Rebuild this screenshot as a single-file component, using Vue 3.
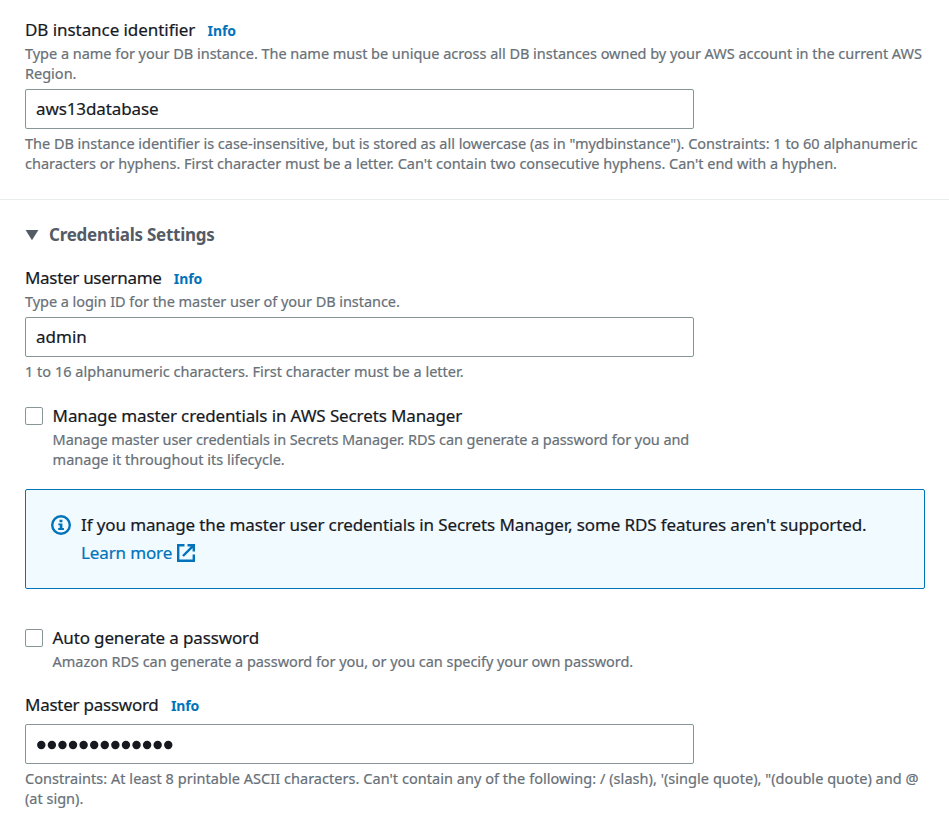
<script setup>
import { ref } from 'vue'

const identifier = ref('aws13database')
const username = ref('admin')
const password = ref('secretpasswd1')
const manageSecrets = ref(false)
const autoGenerate = ref(false)
</script>

<template>
  <main class="page">
    <section class="field identifier">
      <div class="label"><span class="name n-identifier">DB instance identifier</span><a class="info">Info</a></div>
      <p class="hint">
        <span class="line a1">Type a name for your DB instance. The name must be unique across all DB instances owned by your AWS account in the current AWS</span>
        <span class="line a2">Region.</span>
      </p>
      <input v-model="identifier" class="input i-identifier" type="text" />
      <p class="hint after">
        <span class="line a3">The DB instance identifier is case-insensitive, but is stored as all lowercase (as in "mydbinstance"). Constraints: 1 to 60 alphanumeric</span>
        <span class="line a4">characters or hyphens. First character must be a letter. Can't contain two consecutive hyphens. Can't end with a hyphen.</span>
      </p>
    </section>

    <section class="credentials">
      <h2 class="heading">
        <svg class="caret" viewBox="0 0 14 12"><path d="M.6 1h12.8L7 11.2z" /></svg>
        <span class="title">Credentials Settings</span>
      </h2>

      <div class="field username">
        <div class="label"><span class="name n-username">Master username</span><a class="info">Info</a></div>
        <p class="hint"><span class="line b1">Type a login ID for the master user of your DB instance.</span></p>
        <input v-model="username" class="input i-username" type="text" />
        <p class="hint after"><span class="line b2">1 to 16 alphanumeric characters. First character must be a letter.</span></p>
      </div>

      <label class="option manage">
        <input v-model="manageSecrets" class="box" type="checkbox" />
        <span class="option-text">
          <span class="option-name o-manage">Manage master credentials in AWS Secrets Manager</span>
          <span class="hint">
            <span class="line c1">Manage master user credentials in Secrets Manager. RDS can generate a password for you and</span>
            <span class="line c2">manage it throughout its lifecycle.</span>
          </span>
        </span>
      </label>

      <div class="alert">
        <svg class="info-icon" viewBox="0 0 20 20">
          <circle cx="10" cy="10" r="8.8" />
          <path class="solid" d="M8.5 4.8h2.9v2.5H8.5zM7.3 8.4h4.1v4.7h1.5V15H7.2v-1.9h1.5v-2.8H7.3z" />
        </svg>
        <div class="alert-text">
          <div class="alert-line d1">If you manage the master user credentials in Secrets Manager, some RDS features aren't supported.</div>
          <a class="learn"><span class="d2">Learn more</span>
            <svg class="external" viewBox="0 0 18 18"><path d="M7.5 1.2H1.2v15.6h15.6v-6.3M10.5 1.2h6.3v6.3M16.8 1.2L6 12" /></svg>
          </a>
        </div>
      </div>

      <label class="option auto">
        <input v-model="autoGenerate" class="box" type="checkbox" />
        <span class="option-text">
          <span class="option-name o-auto">Auto generate a password</span>
          <span class="hint"><span class="line e1">Amazon RDS can generate a password for you, or you can specify your own password.</span></span>
        </span>
      </label>

      <div class="field password">
        <div class="label"><span class="name n-password">Master password</span><a class="info">Info</a></div>
        <div class="input masked" role="textbox">
          <svg class="dots" viewBox="0 0 140 10">
            <circle v-for="(c, i) in password" :key="i" :cx="5.3 + i * 10.58" cy="5" r="4.2" />
          </svg>
        </div>
        <p class="hint after">
          <span class="line f1">Constraints: At least 8 printable ASCII characters. Can't contain any of the following: / (slash), '(single quote), "(double quote) and @</span>
          <span class="line f2">(at sign).</span>
        </p>
      </div>
    </section>
  </main>
</template>

<style>
body { background: #fff; overflow: hidden; }
</style>

<style scoped>
.page {
  box-sizing: border-box;
  height: 817px;
  overflow: hidden;
  font-family: "Noto Sans", "Open Sans", sans-serif;
  color: #16191f;
  -webkit-text-stroke: 0.2px;
}
.identifier { padding: 15px 24px 26px 25px; border-bottom: 1px solid #eaeded; }
.credentials { padding: 21px 24px 0 25px; }
.label { display: flex; align-items: center; gap: 12.3px; height: 28px; white-space: nowrap; }
.name, .option-name { font-size: 17px; line-height: 28px; }
.name { padding-top: 2px; }
.info { font-size: 14px; line-height: 28px; padding-top: 3px; font-weight: 700; letter-spacing: -0.1px; color: #0073bb; -webkit-text-stroke: 0; }
.hint { display: block; margin: 0; font-size: 14.5px; line-height: 20px; color: #687078; }
.line { display: block; white-space: nowrap; }
.after { padding-top: 4px; }
.input {
  display: block;
  box-sizing: border-box;
  width: 669px;
  height: 40px;
  margin: 6px 0 0;
  padding: 0 10px 2px;
  border: 1px solid #879596;
  border-radius: 2px;
  background: #fff;
  outline: none;
  color: #16191f;
  font-family: inherit;
  font-size: 17px;
}
.heading { display: flex; align-items: center; gap: 10px; margin: 0; height: 28px; color: #545b64; -webkit-text-stroke: 0; }
.caret { width: 14px; height: 12px; fill: currentColor; }
.title { font-size: 17px; line-height: 28px; font-weight: 700; letter-spacing: -0.25px; white-space: nowrap; }
.username { padding-top: 14px; }
.option { display: flex; gap: 9.6px; }
.manage { padding-top: 20px; }
.auto { padding-top: 34px; }
.box {
  appearance: none;
  flex: none;
  box-sizing: border-box;
  width: 18px;
  height: 18px;
  margin: 6px 0 0;
  border: 1px solid #879596;
  border-radius: 2px;
  background: #fff;
}
.option-text, .option-name { display: block; white-space: nowrap; }
.option-name { padding-top: 1px; margin-bottom: -1px; }
.alert {
  display: flex;
  gap: 10px;
  box-sizing: border-box;
  height: 100px;
  margin-top: 20px;
  padding: 21px 25px;
  border: 1px solid #0073bb;
  border-radius: 2px;
  background: #f1faff;
}
.info-icon { flex: none; width: 20px; height: 20px; margin-top: 4px; fill: none; stroke: #0073bb; stroke-width: 2.4; }
.solid { fill: #0073bb; stroke: none; }
.alert-text { font-size: 17px; line-height: 28px; white-space: nowrap; }
.learn { display: flex; align-items: center; gap: 5px; color: #0073bb; }
.external { width: 18px; height: 18px; fill: none; stroke: currentColor; stroke-width: 2.4; }
.password { padding-top: 19px; }
.masked { display: flex; align-items: center; padding-top: 2px; padding-bottom: 0; }
.dots { width: 140px; height: 10px; fill: #16191f; }

.n-identifier { letter-spacing: -0.06px; }
.n-username { letter-spacing: -0.3px; }
.n-password { letter-spacing: -0.25px; }
.i-identifier { letter-spacing: -0.1px; }
.o-manage { letter-spacing: -0.12px; }
.o-auto { letter-spacing: -0.14px; }
.a1 { letter-spacing: -0.03px; }
.a3 { letter-spacing: -0.022px; }
.a4 { letter-spacing: -0.02px; }
.b1 { letter-spacing: -0.05px; }
.b2 { letter-spacing: 0.015px; }
.c1 { letter-spacing: -0.08px; }
.d1 { letter-spacing: -0.11px; }
.d2 { letter-spacing: -0.13px; }
.e1 { letter-spacing: -0.05px; }
.f1 { letter-spacing: 0.04px; }
</style>
